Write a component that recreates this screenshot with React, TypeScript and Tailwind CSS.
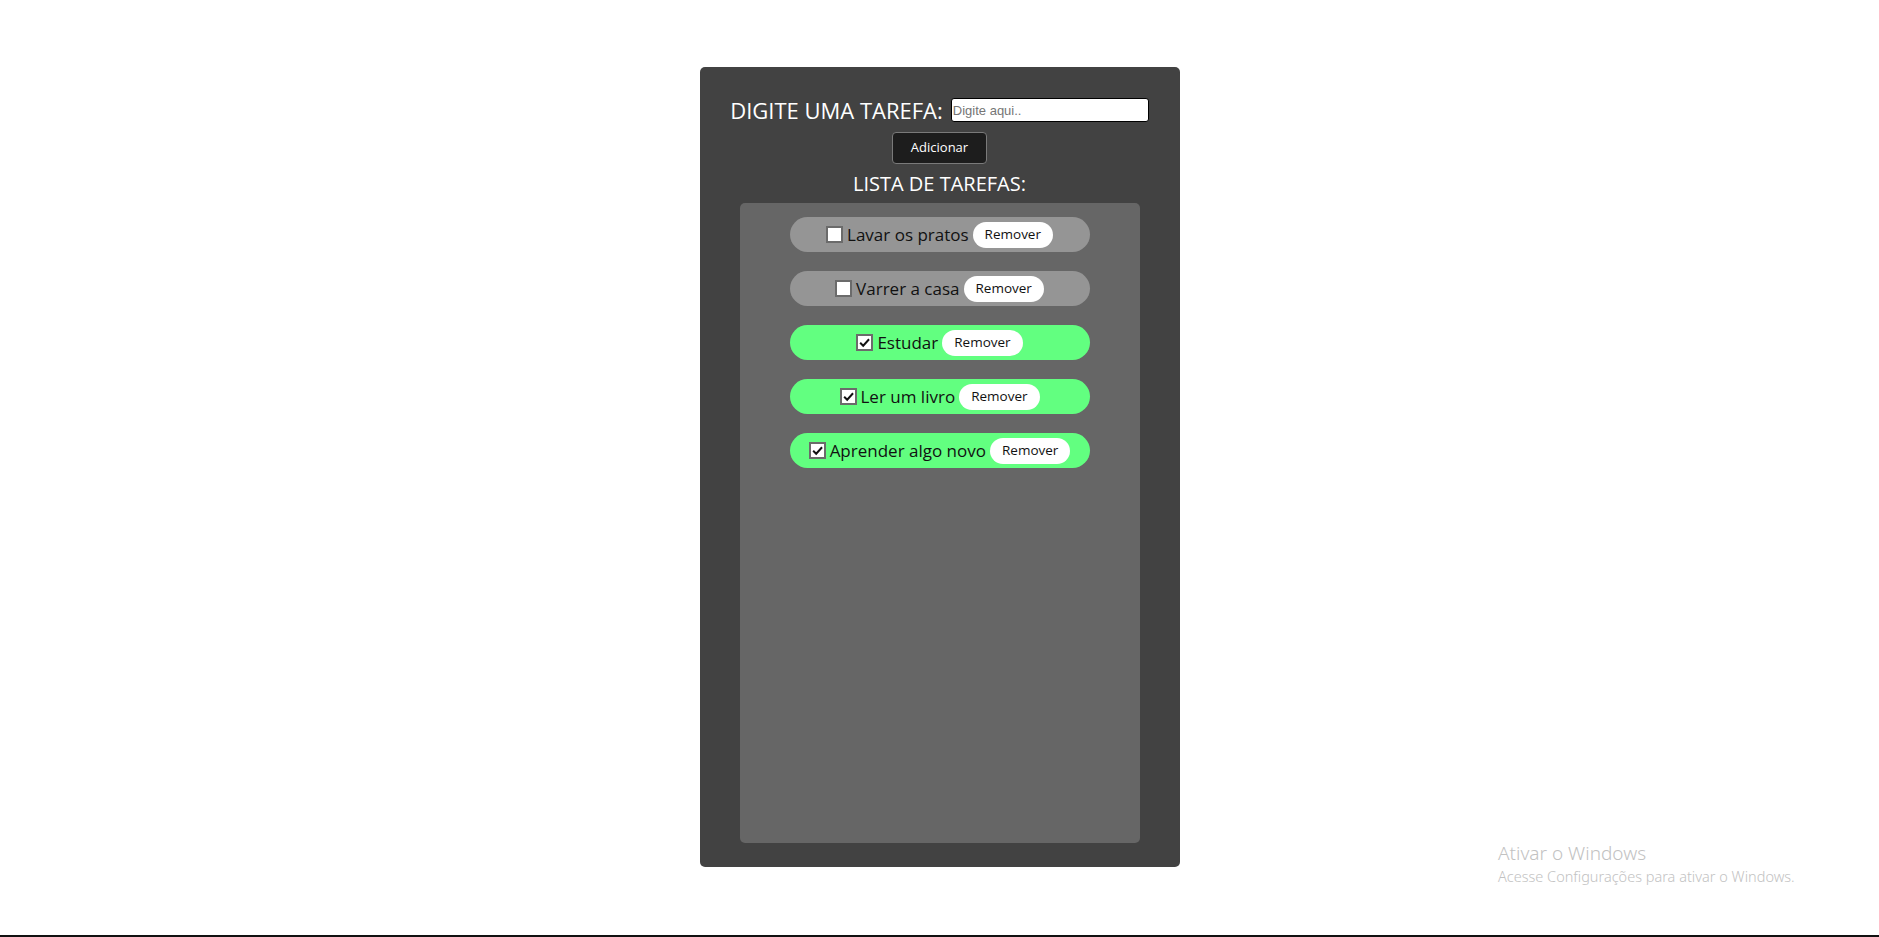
import { useState } from "react";

/**
 * Lista de tarefas — single panel todo list.
 * Checked items turn green; "Remover" drops them from the list.
 */

interface Task {
  id: number;
  text: string;
  done: boolean;
}

const initialTasks: Task[] = [
  { id: 1, text: "Lavar os pratos", done: false },
  { id: 2, text: "Varrer a casa", done: false },
  { id: 3, text: "Estudar", done: true },
  { id: 4, text: "Ler um livro", done: true },
  { id: 5, text: "Aprender algo novo", done: true },
];

const font = { fontFamily: '"Open Sans", "Noto Sans", sans-serif' };

function Check({ checked, onClick }: { checked: boolean; onClick: () => void }) {
  return (
    <button
      type="button"
      onClick={onClick}
      className="flex h-[17px] w-[17px] shrink-0 items-center justify-center border-2 border-[#6b6b6b] bg-white"
    >
      {checked ? (
        <svg viewBox="0 0 12 12" className="h-[13px] w-[13px]">
          <path d="M2 6.2 L4.8 9 L10.2 3" fill="none" stroke="#111" strokeWidth="1.8" />
        </svg>
      ) : null}
    </button>
  );
}

export default function App() {
  const [tasks, setTasks] = useState<Task[]>(initialTasks);
  const [draft, setDraft] = useState("");

  const add = () => {
    if (!draft.trim()) return;
    setTasks([...tasks, { id: Date.now(), text: draft.trim(), done: false }]);
    setDraft("");
  };

  return (
    <div className="relative flex h-[937px] flex-col overflow-hidden bg-white" style={font}>
      <div className="mx-auto mt-[67px] flex h-[800px] w-[480px] flex-col items-center rounded-[5px] bg-[#424242] pt-[31px]">
        <div className="flex h-[24px] items-center gap-[8px]">
          <span className="text-[22px] leading-none text-white">DIGITE UMA TAREFA:</span>
          <input
            value={draft}
            onChange={(e) => setDraft(e.target.value)}
            placeholder="Digite aqui.."
            className="h-[24px] w-[198px] rounded-[3px] border border-black bg-white px-[1px] text-[13px] text-black outline-none placeholder:text-[#757575]"
            style={{ fontFamily: '"Liberation Sans", Arial, sans-serif' }}
          />
        </div>

        <button
          type="button"
          onClick={add}
          className="mt-[10px] h-[32px] w-[95px] rounded-[4px] border border-[#7a7a7a] bg-[#1d1d1d] text-[13px] text-white"
        >
          Adicionar
        </button>

        <h2 className="mt-[6px] text-[20px] leading-[28px] text-white">LISTA DE TAREFAS:</h2>

        <ul className="mt-[5px] flex h-[640px] w-[400px] flex-col items-center gap-[19px] rounded-[5px] bg-[#666666] pt-[14px]">
          {tasks.map((t) => (
            <li
              key={t.id}
              className={`flex h-[35px] w-[300px] items-center justify-center gap-[4px] rounded-full ${
                t.done ? "bg-[#62ff80]" : "bg-[#959595]"
              }`}
            >
              <Check
                checked={t.done}
                onClick={() =>
                  setTasks(tasks.map((x) => (x.id === t.id ? { ...x, done: !x.done } : x)))
                }
              />
              <span className="text-[17px] leading-none text-[#111]">{t.text}</span>
              <button
                type="button"
                onClick={() => setTasks(tasks.filter((x) => x.id !== t.id))}
                className="h-[26px] rounded-full bg-white px-[12px] text-[13.5px] text-[#111]"
              >
                Remover
              </button>
            </li>
          ))}
        </ul>
      </div>

      <div className="mt-auto h-[2px] w-full bg-[#111]" />

      <div
        className="absolute left-[1498px] top-[840px] text-[#c2c2c2]"
        style={{ fontFamily: '"Noto Sans", "Open Sans", sans-serif' }}
      >
        <div className="text-[19px] font-light leading-[26px]">Ativar o Windows</div>
        <div className="text-[14.5px] font-light leading-[20px]">
          Acesse Configurações para ativar o Windows.
        </div>
      </div>
    </div>
  );
}
